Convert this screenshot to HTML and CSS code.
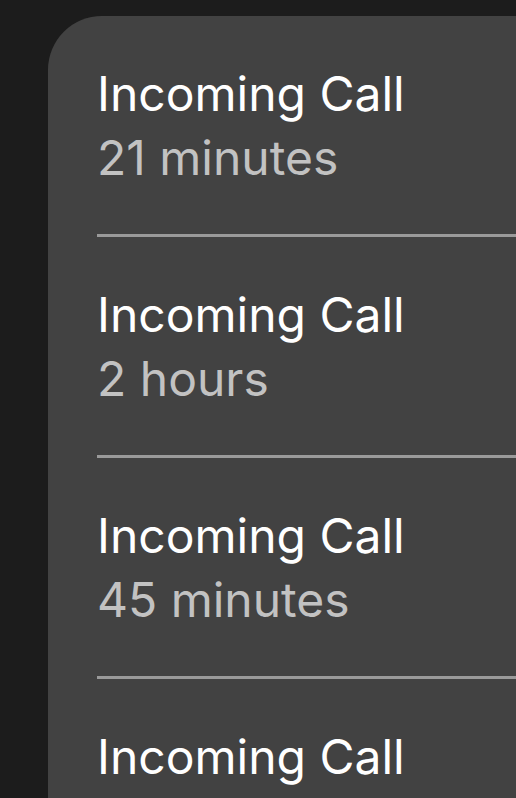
FILE: index.html
```html
<!DOCTYPE html>
<html lang="en">
<head>
    <meta charset="UTF-8">
    <meta name="viewport" content="width=device-width, initial-scale=1.0">
    <title>Recent Calls</title>
    <link rel="stylesheet" href="styles.css">
</head>
<body>
    <div class="call-list">
        <div class="call-row">
            <div class="call-title">Incoming Call</div>
            <div class="call-time">21 minutes</div>
        </div>
        <div class="call-row">
            <div class="call-title">Incoming Call</div>
            <div class="call-time">2 hours</div>
        </div>
        <div class="call-row">
            <div class="call-title">Incoming Call</div>
            <div class="call-time">45 minutes</div>
        </div>
        <div class="call-row">
            <div class="call-title">Incoming Call</div>
        </div>
    </div>
</body>
</html>
```

FILE: styles.css
```css
html, body {
    height: 100%;
}

body {
    font-family: Inter, "Noto Sans", sans-serif;
    margin: 0;
    padding: 0;
    background-color: #1c1c1c;
    overflow: hidden;
}

.call-list {
    margin: 16px 0 0 48px;
    padding-left: 49px;
    min-height: 100%;
    background-color: #424242;
    border-top-left-radius: 54px;
}

.call-row {
    padding: 46px 0 44px;
    border-bottom: 3px solid #9a9a9a;
}

.call-title {
    font-size: 48px;
    line-height: 64px;
    color: #ffffff;
}

.call-time {
    font-size: 48px;
    line-height: 64px;
    color: #c2c2c2;
}
```
